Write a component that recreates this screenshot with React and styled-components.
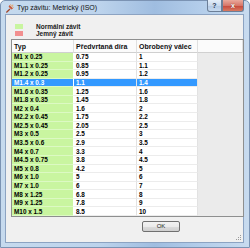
import React from "react";
import styled, { createGlobalStyle } from "styled-components";

const Global = createGlobalStyle`
  html, body { margin: 0; padding: 0; background: #ffffff; }
  body { font-family: "Liberation Sans", Arial, sans-serif; }
`;

const rows = [
  ["M1 x 0.25", "0.75", "1"],
  ["M1.1 x 0.25", "0.85", "1.1"],
  ["M1.2 x 0.25", "0.95", "1.2"],
  ["M1.4 x 0.3", "1.1", "1.4"],
  ["M1.6 x 0.35", "1.25", "1.6"],
  ["M1.8 x 0.35", "1.45", "1.8"],
  ["M2 x 0.4", "1.6", "2"],
  ["M2.2 x 0.45", "1.75", "2.2"],
  ["M2.5 x 0.45", "2.05", "2.5"],
  ["M3 x 0.5", "2.5", "3"],
  ["M3.5 x 0.6", "2.9", "3.5"],
  ["M4 x 0.7", "3.3", "4"],
  ["M4.5 x 0.75", "3.8", "4.5"],
  ["M5 x 0.8", "4.2", "5"],
  ["M6 x 1.0", "5", "6"],
  ["M7 x 1.0", "6", "7"],
  ["M8 x 1.25", "6.8", "8"],
  ["M9 x 1.25", "7.8", "9"],
  ["M10 x 1.5", "8.5", "10"],
];
const SELECTED = 3;

const Frame = styled.div`
  width: 250px;
  height: 248px;
  box-sizing: border-box;
  display: flex;
  flex-direction: column;
  padding: 0 5px 4px 4px;
  border: 1px solid #7b93b3;
  border-radius: 5px 5px 0 0;
  background: linear-gradient(90deg, #c6daee 0%, #bcd3ec 40%, #9fbde0 62%, #b3cdea 80%, #c8dbef 100%);
`;

const TitleBar = styled.div`
  height: 13px;
  display: flex;
  align-items: flex-start;
  flex-shrink: 0;
`;

const AppIcon = styled.svg`
  width: 9px;
  height: 9px;
  margin: 3px 3px 0 0;
  flex-shrink: 0;
`;

const Title = styled.div`
  font-size: 7px;
  line-height: 12px;
  margin-top: 1px;
  color: #111;
  flex: 1;
  white-space: nowrap;
`;

const CaptionButton = styled.div`
  height: 12px;
  width: ${(p) => p.$w}px;
  margin-top: -1px;
  box-sizing: border-box;
  display: flex;
  align-items: center;
  justify-content: center;
  font-size: 7px;
  font-weight: bold;
  border: 1px solid #6c7f98;
  border-top: none;
  background: ${(p) => p.$bg};
  color: ${(p) => p.$color};
  border-radius: ${(p) => p.$radius};
  text-shadow: ${(p) => p.$shadow};
`;

const Content = styled.div`
  flex: 1;
  background: #f0f0f0;
  border: 1px solid #8ca3c2;
  display: flex;
  flex-direction: column;
  padding: 9px 0 0 5px;
  position: relative;
`;

const Legend = styled.div`
  display: flex;
  flex-direction: column;
  gap: 2px;
  margin-left: 4px;
  margin-bottom: 3px;
`;

const LegendItem = styled.div`
  display: flex;
  align-items: center;
  height: 5px;
  font-size: 6.5px;
  font-weight: bold;
  color: #1a1a1a;
`;

const Swatch = styled.span`
  width: 8px;
  height: 5px;
  background: ${(p) => p.$color};
  margin-right: 13px;
`;

const Table = styled.div`
  width: 233px;
  height: 178px;
  box-sizing: border-box;
  border: 1px solid #8e8f8f;
  background: #ebebeb;
  display: grid;
  grid-template-columns: 62px 63px 61px 1fr;
  grid-template-rows: 13px repeat(19, 1fr);
  font-size: 6.4px;
  font-weight: bold;
`;

const HeaderCell = styled.div`
  background: #fbfbfb;
  border-bottom: 1px solid #d0d0d0;
  border-right: 1px solid #e0e0e0;
  display: flex;
  align-items: center;
  padding-left: 2px;
  font-size: 7px;
  color: #111;
  white-space: nowrap;
  overflow: hidden;
`;

const Cell = styled.div`
  display: flex;
  align-items: center;
  padding-left: 2px;
  white-space: nowrap;
  overflow: hidden;
  box-sizing: border-box;
  border-bottom: 1px solid ${(p) => (p.$first ? "#dcf9c3" : "#ececec")};
  border-right: 1px solid ${(p) => (p.$first ? "#ffffff" : "#e2e2e2")};
  background: ${(p) => (p.$sel ? "#3399ff" : p.$first ? "#c9f5a0" : "#ffffff")};
  color: ${(p) => (p.$sel ? "#ffffff" : "#000000")};
`;

const Filler = styled.div`
  background: #ebebeb;
`;

const Footer = styled.div`
  flex: 1;
  display: flex;
  align-items: flex-start;
  padding: 4px 0 0 131px;
`;

const OkButton = styled.button`
  width: 38px;
  height: 11px;
  padding: 0;
  border: 1px solid #707070;
  border-radius: 2px;
  background: linear-gradient(#f2f2f2 0%, #ebebeb 50%, #dddddd 51%, #cfcfcf 100%);
  font-family: "Liberation Sans", Arial, sans-serif;
  font-size: 6px;
  color: #222;
  line-height: 9px;
`;

const Grip = styled.svg`
  position: absolute;
  right: 1px;
  bottom: 1px;
  width: 6px;
  height: 6px;
`;

export default function App() {
  return (
    <>
      <Global />
      <Frame>
        <TitleBar>
          <AppIcon viewBox="0 0 10 10">
            <path d="M1 9 L5 5 L6 6 L2 10 Z" fill="#a4472a" />
            <path d="M5 1 L9 5 L7 6 L4 3 Z" fill="#c9593a" />
            <path d="M6 0 L7 2 L9 1 L8 3 L10 4" stroke="#e8a060" strokeWidth="0.8" fill="none" />
          </AppIcon>
          <Title>Typ závitu: Metrický (ISO)</Title>
          <CaptionButton
            $w={15}
            $bg="linear-gradient(#e4eef9 0%, #c9daee 50%, #b2c8e4 51%, #c8dbf0 100%)"
            $color="#2a3a55"
            $radius="0 0 0 3px"
            $shadow="none"
          >
            ?
          </CaptionButton>
          <CaptionButton
            $w={22}
            $bg="linear-gradient(#eaa99c 0%, #d7776a 50%, #c7463a 51%, #d87a62 100%)"
            $color="#ffffff"
            $radius="0 0 3px 0"
            $shadow="0 0 1px #5a1a10"
          >
            x
          </CaptionButton>
        </TitleBar>
        <Content>
          <Legend>
            <LegendItem>
              <Swatch $color="#c9f5a0" />
              Normální závit
            </LegendItem>
            <LegendItem>
              <Swatch $color="#f28f8f" />
              Jemný závit
            </LegendItem>
          </Legend>
          <Table>
            <HeaderCell>Typ</HeaderCell>
            <HeaderCell>Předvrtaná díra</HeaderCell>
            <HeaderCell>Obrobený válec</HeaderCell>
            <HeaderCell />
            {rows.map((r, i) => (
              <React.Fragment key={r[0]}>
                <Cell $first $sel={i === SELECTED}>{r[0]}</Cell>
                <Cell $sel={i === SELECTED}>{r[1]}</Cell>
                <Cell $sel={i === SELECTED}>{r[2]}</Cell>
                <Filler />
              </React.Fragment>
            ))}
          </Table>
          <Footer>
            <OkButton>OK</OkButton>
          </Footer>
          <Grip viewBox="0 0 6 6">
            <rect x="4" y="0" width="1" height="1" fill="#9a9a9a" />
            <rect x="2" y="2" width="1" height="1" fill="#9a9a9a" />
            <rect x="4" y="2" width="1" height="1" fill="#9a9a9a" />
            <rect x="0" y="4" width="1" height="1" fill="#9a9a9a" />
            <rect x="2" y="4" width="1" height="1" fill="#9a9a9a" />
            <rect x="4" y="4" width="1" height="1" fill="#9a9a9a" />
          </Grip>
        </Content>
      </Frame>
    </>
  );
}
